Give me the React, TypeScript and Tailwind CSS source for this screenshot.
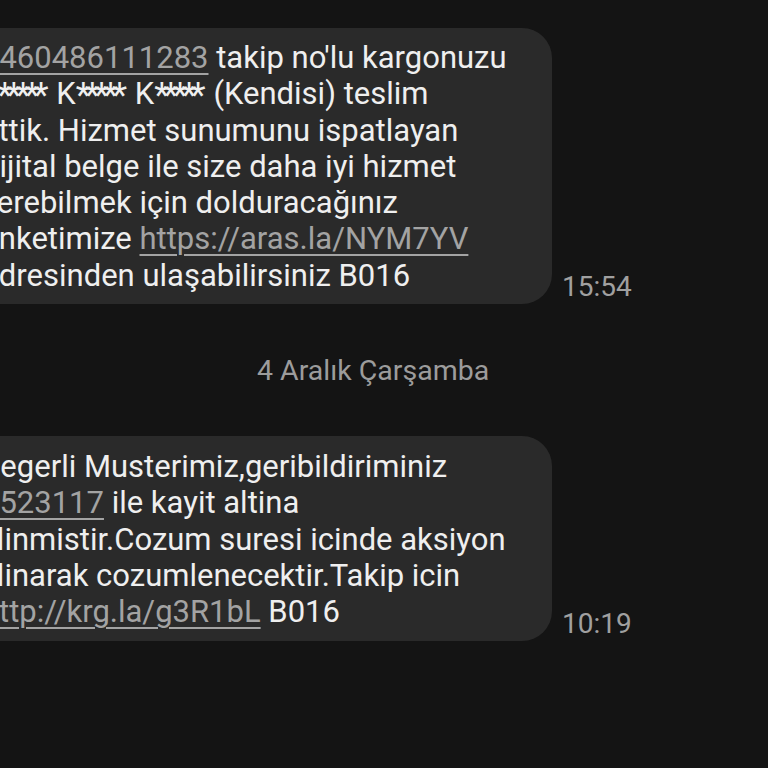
import React from "react";

const Link = ({ children }: { children: React.ReactNode }) => (
  <span className="text-[#a3a3a3] underline decoration-[1.5px] underline-offset-[5px]">{children}</span>
);

const Line = ({ children }: { children: React.ReactNode }) => (
  <div className="whitespace-nowrap">{children}</div>
);

const Stars = () => (
  <span className="relative top-[3px] text-[35px] leading-[0px] tracking-[-6px] mr-[6px]">*****</span>
);

export default function App() {
  return (
    <div
      className="w-[768px] h-[768px] overflow-hidden bg-[#141414] text-[#efefef] text-[28px] leading-[36.3px]"
      style={{ fontFamily: "Roboto, 'Noto Sans', sans-serif" }}
    >
      <div className="flex flex-col pt-[28px]">
        {/* Message 1 */}
        <div className="flex items-end">
          <div className="ml-[-40px] w-[592px] shrink-0 bg-[#2a2a2a] rounded-[30px] pl-[22px] pt-[12px] pb-[10px] text-[31px]">
            <Line>
              <Link>1460486111283</Link> takip no'lu kargonuzu
            </Line>
            <Line>
              <span className="ml-[-5px]">A</span>
              <Stars />
              {" "}K<Stars />
              {" "}K<Stars />
              {" "}(Kendisi) teslim
            </Line>
            <Line>ettik. Hizmet sunumunu ispatlayan</Line>
            <Line>dijital belge ile size daha iyi hizmet</Line>
            <Line>verebilmek için dolduracağınız</Line>
            <Line>
              anketimize <Link>https://aras.la/NYM7YV</Link>
            </Line>
            <Line>adresinden ulaşabilirsiniz B016</Line>
          </div>
          <div className="ml-[10px] text-[#a0a0a0] leading-[36px] mb-[-1px]">15:54</div>
        </div>

        {/* Date */}
        <div className="mt-[49px] mb-[47px] pl-[257px] text-[#9c9c9c] text-[28.5px] leading-[36px]">
          4 Aralık Çarşamba
        </div>

        {/* Message 2 */}
        <div className="flex items-end">
          <div className="ml-[-40px] w-[592px] shrink-0 bg-[#2a2a2a] rounded-[30px] pl-[20px] pt-[13px] pb-[10px] text-[31px]">
            <Line>Degerli Musterimiz,geribildiriminiz</Line>
            <Line>
              <span className="ml-[2px]">
                <Link>2523117</Link> ile kayit altina
              </span>
            </Line>
            <Line>alinmistir.Cozum suresi icinde aksiyon</Line>
            <Line>alinarak cozumlenecektir.Takip icin</Line>
            <Line>
              <span className="ml-[2px]">
                <Link>http://krg.la/g3R1bL</Link> B016
              </span>
            </Line>
          </div>
          <div className="ml-[10px] text-[#a0a0a0] leading-[36px] mb-[-1px]">10:19</div>
        </div>
      </div>
    </div>
  );
}
